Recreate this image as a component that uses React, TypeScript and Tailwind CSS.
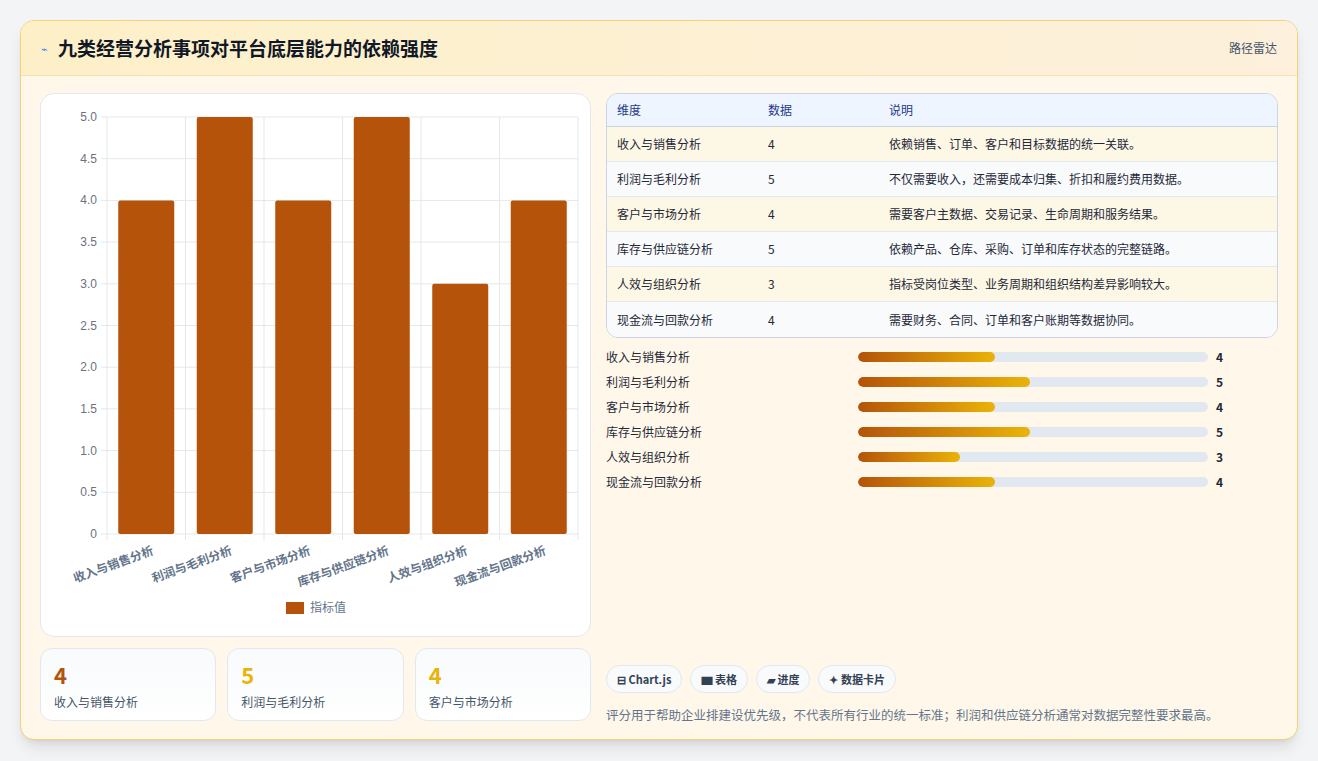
import React from "react";

const rows = [
  ["收入与销售分析", 4, "依赖销售、订单、客户和目标数据的统一关联。"],
  ["利润与毛利分析", 5, "不仅需要收入，还需要成本归集、折扣和履约费用数据。"],
  ["客户与市场分析", 4, "需要客户主数据、交易记录、生命周期和服务结果。"],
  ["库存与供应链分析", 5, "依赖产品、仓库、采购、订单和库存状态的完整链路。"],
  ["人效与组织分析", 3, "指标受岗位类型、业务周期和组织结构差异影响较大。"],
  ["现金流与回款分析", 4, "需要财务、合同、订单和客户账期等数据协同。"],
] as const;

function Chart() {
  const L = 66, T = 23, W = 471, H = 417;
  const ticks = [5, 4.5, 4, 3.5, 3, 2.5, 2, 1.5, 1, 0.5, 0];
  const cw = W / 6;
  return (
    <svg width="550" height="543" className="block">
      {ticks.map((t) => {
        const y = T + H - (t / 5) * H;
        return (
          <g key={t}>
            <line x1={L - 6} x2={L + W} y1={y} y2={y} stroke="#e5e7eb" />
            <text x={L - 10} y={y + 4} textAnchor="end" fontSize="12" fill="#6b7280" fontFamily="Liberation Sans, sans-serif">{t === 0 ? "0" : t.toFixed(1)}</text>
          </g>
        );
      })}
      {Array.from({ length: 7 }).map((_, i) => (
        <line key={i} x1={L + i * cw} x2={L + i * cw} y1={T} y2={T + H + 6} stroke="#e5e7eb" />
      ))}
      {rows.map((r, i) => {
        const h = (r[1] / 5) * H;
        const cx = L + cw * i + cw / 2;
        return (
          <g key={i}>
            <rect x={cx - 28} y={T + H - h} width={56} height={h} rx={2} fill="#b45309" />
            <text x={cx + 8} y={T + H + 20} textAnchor="end" fontSize="12" fontWeight="bold" fill="#64748b" transform={`rotate(-20 ${cx + 8} ${T + H + 20})`} fontFamily="Noto Sans CJK SC, sans-serif">{r[0]}</text>
          </g>
        );
      })}
      <rect x={245} y={508} width={18} height={12} fill="#b45309" />
      <text x={269} y={518} fontSize="12" fill="#64748b" fontFamily="Noto Sans CJK SC, sans-serif">指标值</text>
    </svg>
  );
}

export default function App() {
  return (
    <div className="w-[1318px] h-[761px] bg-[#f3f4f6] pt-[20px] pl-[20px]" style={{ fontFamily: "'Noto Sans CJK SC', 'Noto Sans', sans-serif" }}>
      <div className="w-[1278px] h-[720px] rounded-[14px] border border-[#f3d27a] bg-[#fff8ea] shadow-lg overflow-hidden flex flex-col">
        <div className="h-[55px] flex items-center justify-between px-[20px] bg-gradient-to-r from-[#fdf0c8] to-[#fdf0dc] border-b border-[#f3e2b5]">
          <div className="flex items-center gap-[10px]">
            <span className="text-[#3b82f6] text-[11px]">⌁</span>
            <span className="text-[19px] font-bold text-[#111827]">九类经营分析事项对平台底层能力的依赖强度</span>
          </div>
          <span className="text-[12px] text-[#475569]">路径雷达</span>
        </div>
        <div className="flex gap-[15px] px-[19px] pt-[17px]">
          <div className="w-[551px] flex flex-col gap-[11px]">
            <div className="h-[544px] rounded-[14px] border border-[#e5e7eb] bg-white overflow-hidden"><Chart /></div>
            <div className="grid grid-cols-3 gap-[11px]">
              {[["4", "收入与销售分析", "#b45309"], ["5", "利润与毛利分析", "#eab308"], ["4", "客户与市场分析", "#eab308"]].map(([n, l, c]) => (
                <div key={l} className="h-[73px] rounded-[12px] border border-[#e2e8f0] bg-gradient-to-b from-[#f8fafc] to-white px-[13px] pt-[10px]">
                  <div className="text-[22px] font-bold leading-[30px]" style={{ color: c }}>{n}</div>
                  <div className="text-[12px] text-[#475569] mt-[4px]">{l}</div>
                </div>
              ))}
            </div>
          </div>
          <div className="flex-1 flex flex-col">
            <div className="rounded-[12px] border border-[#cbd5e1] overflow-hidden text-[12px]">
              <div className="flex h-[33px] items-center bg-[#eef5ff] text-[#1e3a8a] border-b border-[#cbd5e1]">
                <div className="w-[161px] pl-[10px]">维度</div><div className="w-[121px]">数据</div><div>说明</div>
              </div>
              {rows.map((r, i) => (
                <div key={i} className={`flex h-[35px] items-center text-[#1f2937] ${i % 2 === 0 ? "bg-[#fdf7e6]" : "bg-[#f8fafc]"} ${i < 5 ? "border-b border-[#e2e8f0]" : ""}`}>
                  <div className="w-[161px] pl-[10px]">{r[0]}</div><div className="w-[121px]">{r[1]}</div><div>{r[2]}</div>
                </div>
              ))}
            </div>
            <div className="flex flex-col gap-[7px] mt-[10px]">
              {rows.map((r, i) => (
                <div key={i} className="flex items-center h-[18px] text-[12px] text-[#1f2937]">
                  <div className="w-[252px]">{r[0]}</div>
                  <div className="w-[350px] h-[10px] rounded-full bg-[#e2e8f0] overflow-hidden">
                    <div className="h-full rounded-full bg-gradient-to-r from-[#b45309] to-[#eab308]" style={{ width: `${r[1] * 10 - 1}%` }} />
                  </div>
                  <div className="ml-[8px] font-bold text-[#1e293b]">{r[1]}</div>
                </div>
              ))}
            </div>
            <div className="flex gap-[8px] mt-[174px]">
              {["⊟ Chart.js", "▆ 表格", "▰ 进度", "✦ 数据卡片"].map((c) => (
                <span key={c} className="h-[28px] px-[10px] flex items-center rounded-full border border-[#e2e8f0] bg-[#f8fafc] text-[11px] font-bold text-[#334155]">{c}</span>
              ))}
            </div>
            <div className="mt-[13px] text-[12.5px] text-[#64748b]">评分用于帮助企业排建设优先级，不代表所有行业的统一标准；利润和供应链分析通常对数据完整性要求最高。</div>
          </div>
        </div>
      </div>
    </div>
  );
}
